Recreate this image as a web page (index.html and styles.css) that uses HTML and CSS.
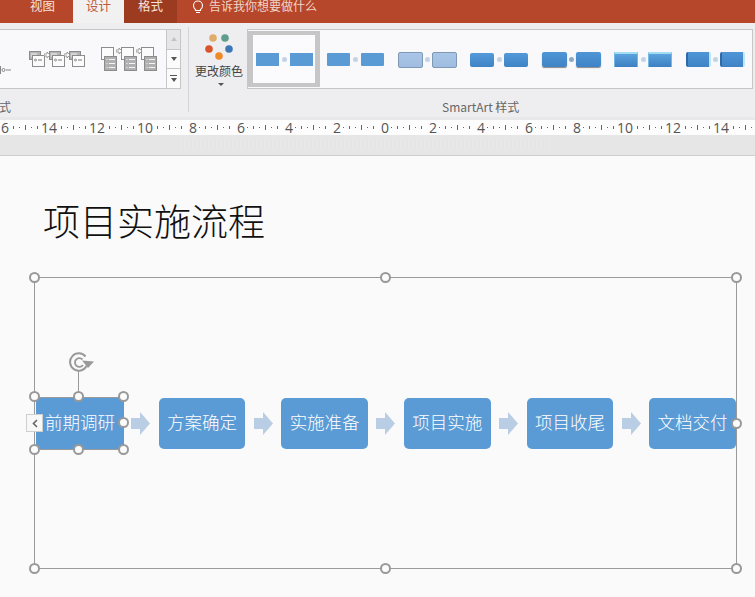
FILE: index.html
```html
<!DOCTYPE html>
<html lang="zh">
<head>
<meta charset="utf-8">
<title>项目实施流程</title>
<link rel="stylesheet" href="styles.css">
</head>
<body>
<svg class="defs" width="0" height="0" aria-hidden="true">
  <defs>
    <symbol id="layoutA" viewBox="0 0 16 16">
      <rect x="0.5" y="0.5" width="11" height="8" fill="#b5b5b5" stroke="#8c8c8c"/>
      <path d="M2 3h6M2 5h4" stroke="#f4f4f4" fill="none"/>
      <rect x="3.5" y="4.5" width="12" height="11" fill="#fbfbfb" stroke="#8c8c8c"/>
      <circle cx="6.500" cy="9" r="1" fill="none" stroke="#777" stroke-width="0.8"/>
      <path d="M9 9h4" stroke="#777" fill="none"/>
    </symbol>
    <symbol id="layoutB" viewBox="0 0 16 24">
      <rect x="0.5" y="0.5" width="12" height="12" fill="#fbfbfb" stroke="#8c8c8c"/>
      <rect x="3.5" y="9.500" width="12" height="14" fill="#b0b0b0" stroke="#8c8c8c"/>
      <path d="M5.500 12.500h1M8 12.500h6M5.500 16.500h1M8 16.500h6M5.500 20.500h1M8 20.500h6" stroke="#f4f4f4" fill="none"/>
    </symbol>
    <symbol id="chev" viewBox="0 0 6 6">
      <path d="M0 2h3V0l3 3-3 3V4H0z" fill="#fff" stroke="#8c8c8c" stroke-width="0.8"/>
    </symbol>
    <symbol id="flow" viewBox="0 0 19 23">
      <path d="M0 6h9V0l10 11.500L9 23v-6H0z" fill="#b9cde5"/>
    </symbol>
  </defs>
</svg>

<header class="tabbar">
  <span class="tab">视图</span>
  <span class="tab tab-active">设计</span>
  <span class="tab tab-format">格式</span>
  <span class="tell">
    <svg class="bulb" width="12" height="14" viewBox="0 0 12 14"><path d="M3.500 9.500C2 8.500 1.500 7 1.500 5.500a4.500 4.500 0 0 1 9 0c0 1.500-.5 3-2 4v1h-5zM4 12.500h4" fill="none" stroke="#fff" stroke-width="1.100"/></svg>
    告诉我你想要做什么
  </span>
</header>

<section class="ribbon">
  <div class="group group-layout">
    <div class="gallery gallery-layout">
      <div class="layout-items">
        <svg class="stub" width="12" height="8" viewBox="0 0 12 8"><circle cx="3.500" cy="4" r="1.500" fill="none" stroke="#888"/><path d="M6 4h5M0.500 0v8" stroke="#888" fill="none"/></svg>
        <div class="icon-set set-a">
          <svg width="16" height="16"><use href="#layoutA"/></svg>
          <svg class="mini" width="6" height="6"><use href="#chev"/></svg>
          <svg width="16" height="16"><use href="#layoutA"/></svg>
          <svg class="mini" width="6" height="6"><use href="#chev"/></svg>
          <svg width="16" height="16"><use href="#layoutA"/></svg>
        </div>
        <div class="icon-set set-b">
          <svg width="16" height="24"><use href="#layoutB"/></svg>
          <svg class="mini" width="6" height="6"><use href="#chev"/></svg>
          <svg width="16" height="24"><use href="#layoutB"/></svg>
          <svg class="mini" width="6" height="6"><use href="#chev"/></svg>
          <svg width="16" height="24"><use href="#layoutB"/></svg>
        </div>
      </div>
      <div class="scroller">
        <span class="scroll-btn scroll-off"><i class="tri tri-up"></i></span>
        <span class="scroll-btn"><i class="tri"></i></span>
        <span class="scroll-btn"><b class="dash"></b><i class="tri"></i></span>
      </div>
    </div>
    <div class="group-label label-clipped">版式</div>
  </div>

  <div class="group group-styles">
    <div class="group-top">
      <div class="color-btn">
        <svg class="dots" width="32" height="30" viewBox="0 0 32 30">
          <circle cx="9" cy="7" r="3.800" fill="#e0ac69"/>
          <circle cx="21" cy="7" r="3.800" fill="#5f9e8f"/>
          <circle cx="5" cy="18" r="3.800" fill="#d9532b"/>
          <circle cx="25" cy="18" r="3.800" fill="#3f77b5"/>
          <circle cx="15" cy="25" r="3.800" fill="#ee8a2a"/>
        </svg>
        <span class="color-text">更改颜色</span>
        <i class="tri tri-color"></i>
      </div>
      <div class="gallery gallery-style">
        <div class="thumb thumb-selected"><span class="bx flat"></span><span class="dot"></span><span class="bx flat"></span></div>
        <div class="thumb"><span class="bx flat round"></span><span class="dot"></span><span class="bx flat round"></span></div>
        <div class="thumb thumb-tight"><span class="bx pale"></span><span class="dot"></span><span class="bx pale"></span></div>
        <div class="thumb thumb-ten"><span class="bx grad"></span><span class="dot"></span><span class="bx grad"></span></div>
        <div class="thumb thumb-tight"><span class="bx shade"></span><span class="dot dot-dark"></span><span class="bx shade"></span></div>
        <div class="thumb thumb-ten"><span class="bx bevel"></span><span class="dot"></span><span class="bx bevel"></span></div>
        <div class="thumb thumb-tight"><span class="bx inset"></span><span class="dot"></span><span class="bx inset"></span></div>
      </div>
    </div>
    <div class="group-label label-styles">SmartArt 样式</div>
  </div>
</section>

<div class="ruler">
  <div class="ruler-nums">
    <span>16</span><span>14</span><span>12</span><span>10</span><span>8</span><span>6</span><span>4</span><span>2</span><span>0</span><span>2</span><span>4</span><span>6</span><span>8</span><span>10</span><span>12</span><span>14</span><span>16</span>
  </div>
</div>
<div class="strip"><div class="strip-ghost"></div></div>

<main class="stage">
  <h1 class="slide-title">项目实施流程</h1>

  <div class="art-frame">
    <div class="flow-row">
      <div class="node node-selected">前期调研</div>
      <svg class="arrow" width="19" height="23"><use href="#flow"/></svg>
      <div class="node">方案确定</div>
      <svg class="arrow" width="19" height="23"><use href="#flow"/></svg>
      <div class="node">实施准备</div>
      <svg class="arrow" width="19" height="23"><use href="#flow"/></svg>
      <div class="node">项目实施</div>
      <svg class="arrow" width="19" height="23"><use href="#flow"/></svg>
      <div class="node">项目收尾</div>
      <svg class="arrow" width="19" height="23"><use href="#flow"/></svg>
      <div class="node">文档交付</div>
    </div>
  </div>

  <span class="h" style="left:34px;top:277px"></span>
  <span class="h" style="left:385px;top:277px"></span>
  <span class="h" style="left:736px;top:277px"></span>
  <span class="h" style="left:736px;top:423px"></span>
  <span class="h" style="left:34px;top:568px"></span>
  <span class="h" style="left:385px;top:568px"></span>
  <span class="h" style="left:736px;top:568px"></span>

  <span class="h" style="left:34px;top:396px"></span>
  <span class="h" style="left:78px;top:396px"></span>
  <span class="h" style="left:123px;top:396px"></span>
  <span class="h" style="left:123px;top:422px"></span>
  <span class="h" style="left:34px;top:449px"></span>
  <span class="h" style="left:78px;top:449px"></span>
  <span class="h" style="left:123px;top:449px"></span>

  <span class="rotate-stem"></span>
  <svg class="rotate" width="26" height="24" viewBox="0 0 26 24">
    <path d="M16.500 5.500A8.700 8.700 0 1 0 17.500 15" fill="none" stroke="#999" stroke-width="2"/>
    <path d="M13.500 8.500A4.400 4.400 0 1 0 14 14" fill="none" stroke="#999" stroke-width="1.800"/>
    <path d="M13 9.500l12 1-6 6.500z" fill="#999"/>
  </svg>
  <span class="collapse">
    <svg width="6" height="9" viewBox="0 0 6 9"><path d="M5 1L1.500 4.500 5 8" fill="none" stroke="#666" stroke-width="1.600"/></svg>
  </span>
</main>
</body>
</html>
```

FILE: styles.css
```css
* { box-sizing: border-box; }

html, body {
  margin: 0;
  width: 755px;
  height: 597px;
  overflow: hidden;
}

body {
  background: #fafafa;
  font-family: "Noto Sans CJK SC", "Noto Sans", sans-serif;
  display: flex;
  flex-direction: column;
}

.defs { position: absolute; }

.tabbar {
  flex: 0 0 23px;
  display: flex;
  align-items: flex-start;
  background: #b7472a;
  color: #fff;
  font-size: 12.500px;
  line-height: 12px;
  padding-left: 17px;
}

.tab {
  width: 51px;
  height: 23px;
  text-align: center;
  color: #f6e3dc;
  margin-right: 5px;
}

.tab-active {
  width: 51px;
  background: #f2f1f2;
  color: #c0583c;
  margin-right: 0;
}

.tab-format {
  width: 53px;
  background: #9c3b20;
  color: #f6e3dc;
  margin-right: 0;
}

.tell {
  display: flex;
  align-items: flex-start;
  gap: 5px;
  margin-left: 15px;
  color: #f0d5cb;
  font-size: 12px;
}

.ribbon {
  flex: 0 0 94px;
  display: flex;
  background: #eeeef0;
  color: #666;
}

.group { display: flex; flex-direction: column; }

.group-layout {
  flex: 0 0 189px;
  padding-right: 8px;
  position: relative;
}

.group-layout::after {
  content: "";
  position: absolute;
  right: 0;
  top: 4px;
  bottom: 5px;
  border-right: 1px solid #d4d4d6;
}

.gallery {
  height: 60px;
  margin-top: 6px;
  background: #f9f9fb;
  border: 1px solid #c6c6c6;
  display: flex;
}

.gallery-layout {
  border-left: 0;
  width: 181px;
}

.layout-items {
  flex: 1;
  display: flex;
  position: relative;
}

.stub { margin-top: 36px; flex: 0 0 12px; }

.icon-set { display: flex; align-items: flex-start; }

.set-a { margin: 21px 0 0 17px; width: 55px; }
.set-b { margin: 17px 0 0 17px; width: 58px; }

.icon-set svg { flex: none; }

.mini {
  margin: 1px -1px 0;
  position: relative;
  z-index: 1;
}

.scroller {
  flex: 0 0 14px;
  display: flex;
  flex-direction: column;
  border-left: 1px solid #c6c6c6;
}

.scroll-btn {
  flex: 1;
  display: flex;
  flex-direction: column;
  align-items: center;
  justify-content: center;
  gap: 2px;
  border-bottom: 1px solid #c6c6c6;
  background: #fbfbfb;
}

.scroll-btn:last-child { border-bottom: 0; }
.scroll-off { background: #e6e6e8; }
.scroll-off .tri-up { border-bottom-color: #c2c2c2; }

.tri {
  width: 0;
  height: 0;
  border-left: 3.500px solid transparent;
  border-right: 3.500px solid transparent;
  border-top: 4px solid #555;
}

.tri-up {
  border-top: 0;
  border-bottom: 4px solid #555;
}

.dash {
  width: 7px;
  height: 1px;
  background: #555;
}

.group-label {
  font-size: 12px;
  line-height: 16px;
  margin-top: 10px;
}

.label-clipped {
  margin-left: -13px;
}

.group-styles { flex: 1; min-width: 0; }

.group-top { display: flex; }

.color-btn {
  flex: 0 0 58px;
  display: flex;
  flex-direction: column;
  align-items: center;
  color: #444;
  font-size: 12px;
  padding: 8px 0 0 2px;
}

.dots { margin-left: 2px; flex: 0 0 30px; }

.color-text {
  line-height: 16px;
  margin-top: 2px;
  white-space: nowrap;
}

.tri-color {
  margin: 4px 0 0 3px;
  border-left-width: 3px;
  border-right-width: 3px;
  border-top-width: 3px;
}

.gallery-style { width: 506px; }

.thumb {
  flex: 0 0 72px;
  display: flex;
  align-items: center;
  justify-content: center;
  gap: 3px;
  padding: 1px 2px 0 0;
}

.thumb-selected {
  height: 56px;
  margin-top: 1px;
  border-style: solid;
  border-color: #c6c6c6;
  border-width: 4px 5px;
  background: #fbfbfd;
  padding: 0;
}

.thumb-tight .dot { margin: 0 -1px; }
.thumb-ten .dot { margin: 0 -0.500px; }

.bx {
  width: 23px;
  height: 13px;
  flex: 0 0 auto;
  background: #5b9bd5;
}

.round { border-radius: 1px; }

.pale {
  width: 25px;
  height: 16px;
  border-radius: 2px;
  background: linear-gradient(#a9c6e8, #a0bce0);
  border: 1px solid #7f98b4;
}

.grad {
  width: 24px;
  height: 14px;
  border-radius: 2px;
  background: linear-gradient(#539ad9, #3f85c6);
}

.shade {
  width: 25px;
  height: 15px;
  border-radius: 2px;
  background: linear-gradient(#4f96d7, #3f83c5);
  box-shadow: 0 1px 1px #8a8a8a;
}

.bevel {
  width: 24px;
  height: 15px;
  background: linear-gradient(#5aa2dd, #3d80c2);
  border-top: 2px solid #a4dcf4;
  border-left: 1px solid #74b8e8;
  border-right: 1px solid #74b8e8;
}

.inset {
  width: 25px;
  height: 15px;
  border-radius: 2px;
  background: linear-gradient(#4f96d7, #3f83c5);
  border-left: 2px solid #2f6aa8;
  border-right: 2px solid #bfe6f8;
}

.dot {
  width: 5px;
  height: 5px;
  flex: 0 0 5px;
  border-radius: 50%;
  background: #c3d3e6;
}

.dot-dark { background: #8fa9c4; }

.label-styles { margin-left: 253px; }

.ruler {
  flex: 0 0 18px;
  background-color: #e8e8ea;
  padding-top: 3px;
  overflow: hidden;
}

.ruler-nums {
  height: 15px;
  margin-left: -23px;
  width: 816px;
  display: flex;
  background-color: #fdfdfd;
  background-image:
    repeating-linear-gradient(90deg, #666 0 1px, transparent 1px 24px),
    repeating-linear-gradient(90deg, #666 0 1px, transparent 1px 12px),
    repeating-linear-gradient(90deg, #666 0 1px, transparent 1px 12px);
  background-size: 100% 5px, 100% 3px, 100% 1px;
  background-repeat: no-repeat;
  background-position: 0 5px, 0 6px, 6px 7px;
}

.ruler-nums span {
  flex: 0 0 48px;
  display: flex;
  justify-content: center;
  font: 14px/15px "Open Sans", sans-serif;
  color: #555;
  background: linear-gradient(#fdfdfd, #fdfdfd) center / 12px 100% no-repeat;
}

.ruler-nums span:nth-child(n+14),
.ruler-nums span:nth-child(-n+4) {
  background-size: 22px 100%;
}

.strip {
  flex: 0 0 21px;
  background: #e6e6e6;
  border-bottom: 1px solid #cfcfcf;
  padding: 3px 0 0 180px;
}

.strip-ghost {
  width: 370px;
  height: 12px;
  background: repeating-linear-gradient(90deg, #e8e8e8 0 2px, #e5e5e5 2px 4px);
}

.stage {
  flex: 1;
  background: #fafafa;
}

.slide-title {
  position: absolute;
  left: 43px;
  top: 193px;
  margin: 0;
  font-size: 37px;
  line-height: 54px;
  font-weight: 300;
  color: #111;
}

.art-frame {
  position: absolute;
  left: 34px;
  top: 277px;
  width: 703px;
  height: 292px;
  border: 1px solid #9a9a9a;
  padding: 120px 0 0 1px;
}

.flow-row {
  width: 700px;
  display: flex;
  align-items: center;
  justify-content: space-between;
}

.node {
  flex: 0 0 86.600px;
  height: 51px;
  display: flex;
  align-items: center;
  justify-content: center;
  background: #5b9bd5;
  border-radius: 5px;
  color: #fff;
  font-size: 17.500px;
  font-weight: 300;
  padding-bottom: 4px;
}

.node-selected {
  flex-basis: 88px;
  margin-right: -1.400px;
  border-radius: 0;
  box-shadow: 0 -1px 0 #999, 0 1px 0 #999;
}

.arrow { flex: 0 0 19px; }

.h {
  position: absolute;
  width: 11px;
  height: 11px;
  margin: -5px 0 0 -5px;
  border-radius: 50%;
  background: #fcfcfc;
  border: 2px solid #999;
}

.rotate-stem {
  position: absolute;
  left: 78px;
  top: 371px;
  width: 1px;
  height: 22px;
  background: #999;
}

.rotate {
  position: absolute;
  left: 69px;
  top: 351px;
}

.collapse {
  position: absolute;
  left: 26px;
  top: 414px;
  width: 17px;
  height: 18px;
  background: #f8f8f8;
  border: 1px solid #cfcfcf;
  display: flex;
  align-items: center;
  justify-content: center;
}
```
